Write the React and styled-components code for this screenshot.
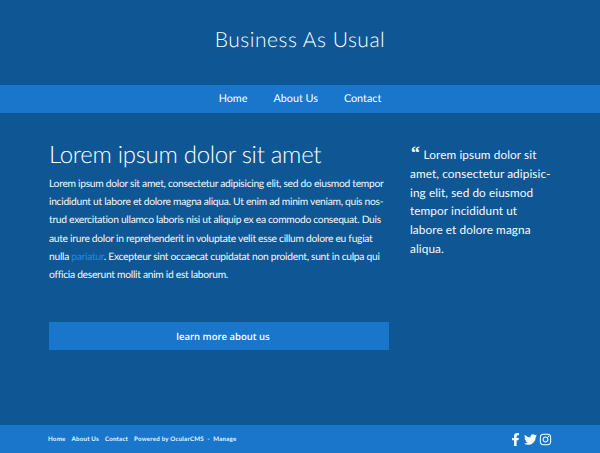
import React from "react";
import styled, { createGlobalStyle } from "styled-components";
import { FaFacebookF, FaTwitter, FaInstagram } from "react-icons/fa";

const Global = createGlobalStyle`
  html, body { margin: 0; padding: 0; }
  body { background: #0f5794; font-family: "Lato", "Open Sans", sans-serif; color: #fff; text-rendering: geometricPrecision; }
`;
const Page = styled.div`
  width: 600px; height: 453px; display: flex; flex-direction: column; overflow: hidden; background: #0f5794;
`;
const Header = styled.header`
  height: 85px; flex: none; display: flex; align-items: flex-start; justify-content: center; padding-top: 26px; box-sizing: border-box;
`;
const SiteTitle = styled.h1`
  margin: 0; font-size: 21px; line-height: 28px; font-weight: 300; letter-spacing: 0.5px; color: #fff;
`;
const Nav = styled.nav`
  height: 28px; flex: none; background: #1976cb; display: flex; align-items: center; justify-content: center; gap: 26px; padding-bottom: 2px; box-sizing: border-box;
`;
const NavLink = styled.a`
  font-size: 10.8px; color: #fff; letter-spacing: 0;
`;
const Main = styled.main`
  flex: 1; display: flex; padding: 27px 48px 0 49px; gap: 21px;
`;
const Article = styled.article`
  width: 340px; flex: none;
`;
const Heading = styled.h2`
  margin: 0 0 5px; font-size: 24px; line-height: 30px; font-weight: 300; letter-spacing: -0.3px; color: #fff;
`;
const Body = styled.p`
  margin: 0; font-size: 10.3px; line-height: 18.2px; white-space: nowrap; color: #f2f6fa; letter-spacing: -0.3px;
`;
const InlineLink = styled.a`
  color: #2488e4;
`;
const Cta = styled.a`
  margin-top: 38px; height: 28px; display: flex; align-items: center; justify-content: center; padding-left: 8px;
  background: #1976cb; font-family: "Open Sans", sans-serif; font-size: 9.5px; font-weight: 600; color: #fff;
`;
const Aside = styled.aside`
  flex: 1; padding-top: 6px;
`;
const Quote = styled.p`
  margin: 0; font-size: 11.8px; line-height: 18.8px; white-space: nowrap; color: #f4f7fb; letter-spacing: 0.08px;
`;
const QuoteMark = styled.span`
  font-family: "Liberation Serif", serif; font-style: italic; font-weight: 700; font-size: 19px; line-height: 0; margin-right: 4px;
`;
const Footer = styled.footer`
  height: 28px; flex: none; background: #1976cb; display: flex; align-items: center; justify-content: space-between; padding: 0 48px 0 48px;
`;
const FootLinks = styled.div`
  display: flex; gap: 6px; font-size: 6.2px; font-weight: 700; color: #eaf3fb; letter-spacing: 0.2px; white-space: nowrap;
`;
const Socials = styled.div`
  display: flex; align-items: center; gap: 2px; color: #fff; font-size: 13px;
`;

export default function App() {
  return (
    <Page>
      <Global />
      <Header><SiteTitle>Business As Usual</SiteTitle></Header>
      <Nav>
        <NavLink>Home</NavLink>
        <NavLink>About Us</NavLink>
        <NavLink>Contact</NavLink>
      </Nav>
      <Main>
        <Article>
          <Heading>Lorem ipsum dolor sit amet</Heading>
          <Body>
            Lorem ipsum dolor sit amet, consectetur adipisicing elit, sed do eiusmod tempor<br />
            incididunt ut labore et dolore magna aliqua. Ut enim ad minim veniam, quis nos-<br />
            trud exercitation ullamco laboris nisi ut aliquip ex ea commodo consequat. Duis<br />
            aute irure dolor in reprehenderit in voluptate velit esse cillum dolore eu fugiat<br />
            nulla <InlineLink>pariatur</InlineLink>. Excepteur sint occaecat cupidatat non proident, sunt in culpa qui<br />
            officia deserunt mollit anim id est laborum.
          </Body>
          <Cta>learn more about us</Cta>
        </Article>
        <Aside>
          <Quote>
            <QuoteMark>“</QuoteMark>Lorem ipsum dolor sit<br />
            amet, consectetur adipisic-<br />
            ing elit, sed do eiusmod<br />
            tempor incididunt ut<br />
            labore et dolore magna<br />
            aliqua.
          </Quote>
        </Aside>
      </Main>
      <Footer>
        <FootLinks>
          <span>Home</span><span>About Us</span><span>Contact</span>
          <span>Powered by OcularCMS &nbsp;-&nbsp; Manage</span>
        </FootLinks>
        <Socials><FaFacebookF /><FaTwitter /><FaInstagram /></Socials>
      </Footer>
    </Page>
  );
}
